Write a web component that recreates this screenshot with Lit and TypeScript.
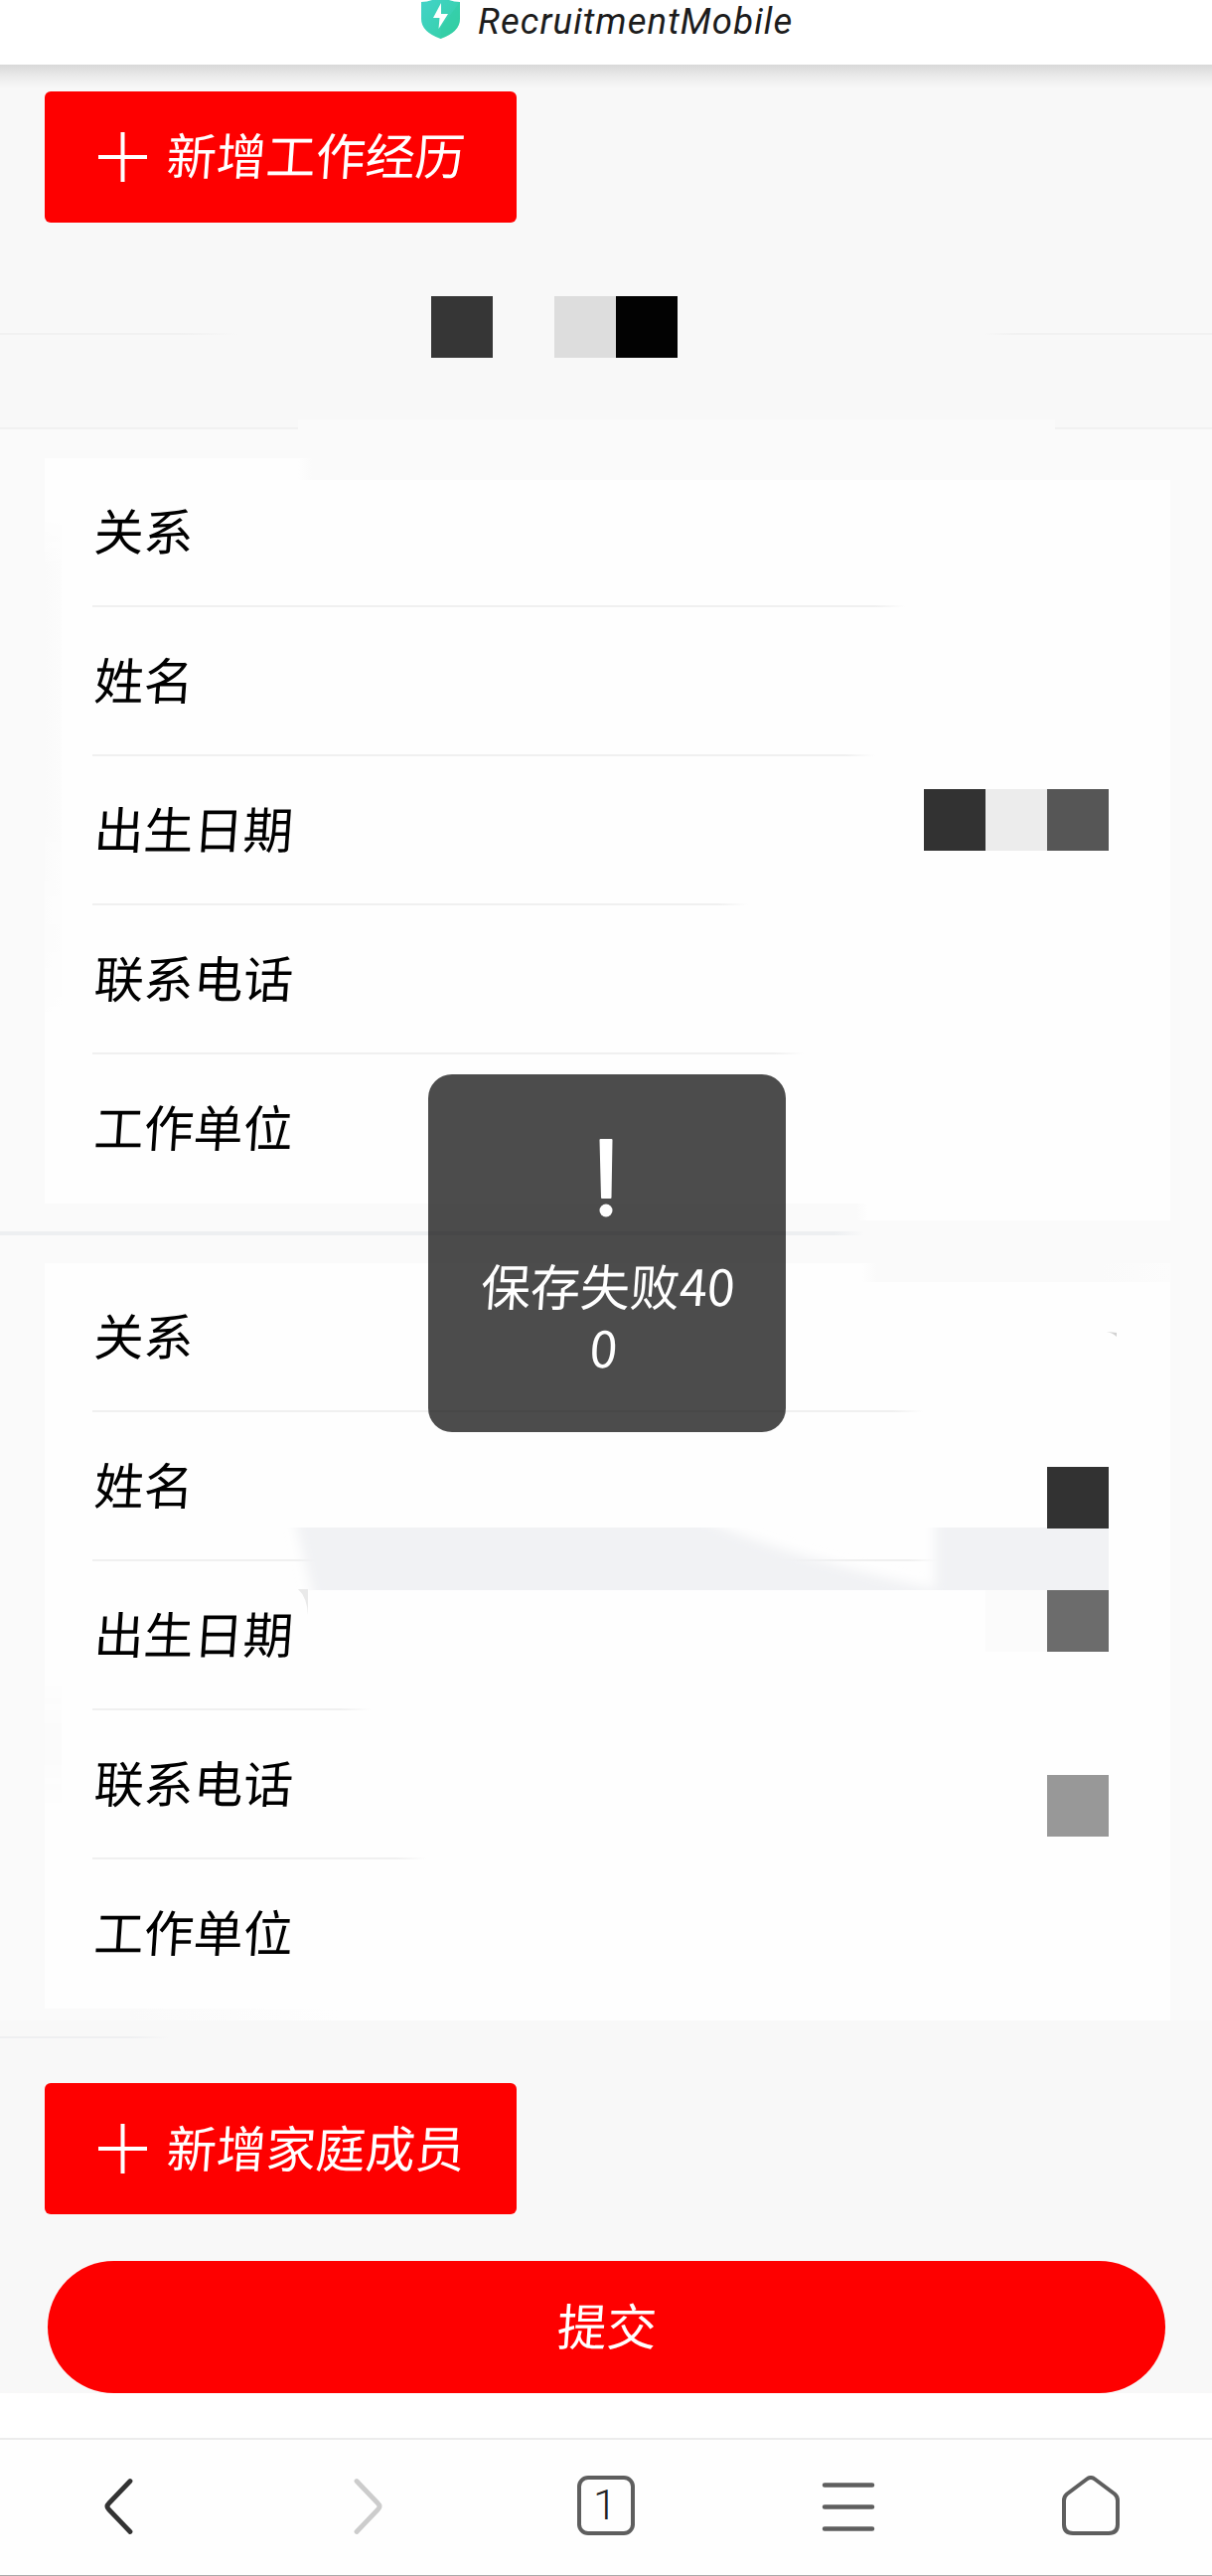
import { LitElement, html, css } from "lit";
import { customElement, property } from "lit/decorators.js";

interface Row {
  label: string;
  /** Width of the separator under the row, in pixels; 0 draws none. */
  rule: number;
}

const FIRST: Row[] = [
  { label: "关系", rule: 818 },
  { label: "姓名", rule: 788 },
  { label: "出生日期", rule: 660 },
  { label: "联系电话", rule: 716 },
  { label: "工作单位", rule: 0 },
];

const SECOND: Row[] = [
  { label: "关系", rule: 836 },
  { label: "姓名", rule: 852 },
  { label: "出生日期", rule: 280 },
  { label: "联系电话", rule: 336 },
  { label: "工作单位", rule: 0 },
];

const FONT = css`"Noto Sans CJK SC", "Liberation Sans", sans-serif`;

@customElement("member-card")
class MemberCard extends LitElement {
  @property({ attribute: false }) rows: Row[] = [];

  static styles = css`
    :host {
      display: block;
      background: #fefefe;
      font-family: ${FONT};
    }
    .row {
      box-sizing: border-box;
      height: 150px;
      padding: 0 48px;
      display: flex;
      flex-direction: column;
    }
    .label {
      flex: 1;
      display: flex;
      align-items: center;
      padding: 0 0 7px 2px;
      font-size: 50px;
      font-weight: 400;
      line-height: 1;
      color: #000;
      transform: skewX(-4deg);
    }
    .rule {
      height: 2px;
      flex: none;
      background: linear-gradient(90deg, #f0f0f0 calc(100% - 30px), #fefefe);
    }
  `;

  render() {
    return this.rows.map(
      (r) => html`<div class="row">
        <div class="label">${r.label}</div>
        <div class="rule" style="width:${r.rule}px"></div>
      </div>`
    );
  }
}

@customElement("add-button")
class AddButton extends LitElement {
  @property() label = "";

  static styles = css`
    :host {
      box-sizing: border-box;
      display: flex;
      align-items: center;
      gap: 20px;
      width: 475px;
      height: 132px;
      margin-left: 45px;
      padding-left: 54px;
      border-radius: 6px;
      background: #fe0000;
      color: #fff;
      font-family: ${FONT};
      font-size: 50px;
      font-weight: 400;
      line-height: 1;
    }
    .plus {
      width: 49px;
      height: 50px;
      flex: none;
    }
    .text {
      white-space: nowrap;
      padding-bottom: 7px;
      transform: skewX(-4deg);
    }
  `;

  render() {
    return html`<svg class="plus" viewBox="0 0 49 50">
        <path d="M0 25H49M24.5 0V50" stroke="#fff" stroke-width="4" />
      </svg>
      <span class="text">${this.label}</span>`;
  }
}

@customElement("app-root")
class AppRoot extends LitElement {
  static styles = css`
    :host {
      position: relative;
      display: flex;
      flex-direction: column;
      width: 1220px;
      height: 2592px;
      overflow: hidden;
      background: #fff;
      font-family: ${FONT};
    }
    .header {
      height: 65px;
      flex: none;
      box-sizing: border-box;
      padding-left: 424px;
      display: flex;
      align-items: flex-start;
      background: #fff;
    }
    .shield {
      width: 40px;
      height: 40px;
      margin-right: 17px;
    }
    .title {
      font-family: Roboto, "Liberation Sans", sans-serif;
      font-style: italic;
      font-size: 36.5px;
      letter-spacing: 1.1px;
      line-height: 43px;
      color: #1c1c1c;
      white-space: nowrap;
    }
    .body {
      height: 2343px;
      flex: none;
      background: linear-gradient(#d8d8d8, #ebebeb 12px, #f8f8f8 24px);
    }
    .work {
      padding-top: 26.5px;
      height: 132.5px;
    }
    .section {
      box-sizing: border-box;
      height: 208px;
      padding-top: 73px;
      border-bottom: 2px solid #f1f1f1;
      display: grid;
      grid-template-columns: 240px 1fr 230px;
      align-items: start;
    }
    .hair {
      height: 2px;
      margin-top: 38px;
      background: linear-gradient(90deg, #f1f1f1 75%, #f8f8f8);
    }
    .hair.flip {
      background: linear-gradient(270deg, #f1f1f1 85%, #f8f8f8);
    }
    .tiles {
      display: flex;
      padding-left: 194px;
      padding-top: 0.5px;
    }
    .tile {
      width: 62px;
      height: 62px;
    }
    .t0 { background: #363636; }
    .t2 { background: #dddddd; }
    .t3 { background: #020202; }
    .family {
      height: 1601px;
      background: #fafafa;
      padding-top: 29px;
      box-sizing: border-box;
    }
    member-card {
      margin: 0 42px 0 45px;
    }
    .divider {
      width: 870px;
      height: 4px;
      margin: 28px 0;
      background: linear-gradient(90deg, #edeff1 840px, #fafafa);
    }
    .tail {
      height: 63px;
      background: #f8f8f8;
    }
    .submit {
      box-sizing: border-box;
      height: 133px;
      margin: 47px 47px 0 48px;
      border-radius: 67px;
      background: #fe0000;
      color: #fff;
      display: flex;
      align-items: center;
      justify-content: center;
      font-size: 50px;
      font-weight: 400;
      line-height: 1;
    }
    .submit span {
      padding-bottom: 7px;
      transform: skewX(-4deg);
    }
    .nav {
      box-sizing: border-box;
      height: 139px;
      margin-top: 45px;
      border-top: 2px solid #ececec;
      border-bottom: 1px solid #aaa;
      background: #fefefe;
      display: grid;
      grid-template-columns: repeat(5, 244px);
      justify-items: center;
      padding-top: 36px;
    }
    .nav svg {
      width: 64px;
      height: 64px;
    }
    .tab {
      box-sizing: border-box;
      width: 58px;
      height: 60px;
      margin-top: 0;
      border: 4px solid #5e5e5e;
      border-radius: 11px;
      display: flex;
      align-items: center;
      justify-content: center;
      padding: 0 2px 1px 0;
      font-family: Roboto, "Liberation Sans", sans-serif;
      font-size: 43px;
      font-weight: 300;
      line-height: 1;
      color: #222;
    }
    .patch {
      position: absolute;
    }
    .toast {
      position: absolute;
      left: 431px;
      top: 1080.5px;
      width: 360px;
      height: 360px;
      box-sizing: border-box;
      padding: 61px 46px 0;
      border-radius: 24px;
      background: rgba(0, 0, 0, 0.7);
      color: #fff;
      text-align: center;
    }
    .bang {
      display: block;
      width: 20px;
      height: 84px;
      margin: 0 auto 35px;
      padding-right: 2px;
    }
    .message {
      font-size: 50px;
      font-weight: 400;
      line-height: 62px;
      word-break: break-all;
      transform: translateX(-1px) skewX(-4deg);
    }
    .p1 { left: 300px; top: 422px; width: 762px; height: 12px; background: #fafafa; }
    .p2 { left: 300px; top: 461px; width: 878px; height: 22px; background: linear-gradient(90deg, #fefefe, #fafafa 14px); }
    .p3 { left: 45px; top: 520px; width: 17px; height: 520px; background: linear-gradient(90deg, #fafafa, #fcfcfc); -webkit-mask: linear-gradient(transparent, #000 50px, #000 300px, transparent); }
    .p4 { left: 862px; top: 1211px; width: 316px; height: 17px; background: linear-gradient(90deg, #fafafa, #fefefe 12px); }
    .p5 { left: 868px; top: 1271px; width: 310px; height: 19px; background: linear-gradient(90deg, #fefefe, #fafafa 14px, #fafafa 240px, #fcfcfc); }
    .p6 { left: 45px; top: 1690px; width: 17px; height: 130px; background: #fbfbfb; -webkit-mask: linear-gradient(transparent, #000 50px, #000 80px, transparent); }
    .p7 { left: 130px; top: 2021px; width: 1048px; height: 12px; background: linear-gradient(90deg, #fafafa, #fefefe 210px); }
    .p8 { left: 130px; top: 2033px; width: 1090px; height: 31px; background: linear-gradient(90deg, rgba(248, 248, 248, 0), #f8f8f8 45px); }
    .p9 { left: 0; top: 2049px; width: 170px; height: 2px; background: linear-gradient(90deg, #eeeff1 130px, #f8f8f8); }
    .q1 { left: 930px; top: 793.5px; background: #323232; }
    .q2 { left: 992px; top: 793.5px; background: #ececec; }
    .q3 { left: 1054px; top: 793.5px; background: #565656; }
    .q4 { left: 1054px; top: 1475.5px; background: #323232; }
    .q5 { left: 992px; top: 1599.5px; background: #fbfbfb; }
    .q6 { left: 1054px; top: 1599.5px; background: #6c6c6c; }
    .q7 { left: 1054px; top: 1785.5px; background: #989898; }
    .smear { left: 285px; top: 1537px; width: 831px; height: 63px; }
    .speck { left: 1112px; top: 1338px; width: 14px; height: 9px; }
    .corner { left: 300px; top: 1599px; width: 10px; height: 26px; }
  `;

  render() {
    return html`
      <div class="header">
        <svg class="shield" viewBox="0 0 40 40">
          <defs>
            <linearGradient id="g" x1="0" y1="0" x2="1" y2="1">
              <stop offset="0" stop-color="#43d3cb" />
              <stop offset="1" stop-color="#35d0a2" />
            </linearGradient>
          </defs>
          <path d="M0 2Q11 2 19.500 -5Q28 2 39 2V19Q39 32 19.500 39Q0 32 0 19Z" fill="url(#g)" />
          <path d="M19.500 28V39Q39 32 39 19V2Z" fill="#2dcb9f" opacity=".35" />
          <path d="M20 3L12 18H18.500L17.500 29L27 14H20Z" fill="#fff" />
        </svg>
        <span class="title">RecruitmentMobile</span>
      </div>
      <div class="body">
        <div class="work"><add-button label="新增工作经历"></add-button></div>
        <div class="section">
          <div class="hair"></div>
          <div class="tiles">
            <div class="tile t0"></div>
            <div class="tile"></div>
            <div class="tile t2"></div>
            <div class="tile t3"></div>
          </div>
          <div class="hair flip"></div>
        </div>
        <div class="family">
          <member-card .rows=${FIRST}></member-card>
          <div class="divider"></div>
          <member-card .rows=${SECOND}></member-card>
        </div>
        <div class="tail"></div>
        <add-button label="新增家庭成员"></add-button>
        <div class="submit"><span>提交</span></div>
      </div>
      <div class="nav">
        <svg viewBox="0 0 64 64" fill="none" stroke="#333" stroke-width="4.800" stroke-linecap="round">
          <path d="M41 5.500L19.500 28Q16.500 31 19.500 34L41 56.500" />
        </svg>
        <svg viewBox="0 0 64 64" fill="none" stroke="#ccc" stroke-width="4.800" stroke-linecap="round">
          <path d="M25 5.500L46.500 28Q49.500 31 46.500 34L25 56.500" />
        </svg>
        <div class="tab">1</div>
        <svg viewBox="0 0 64 64" stroke="#5e5e5e" stroke-width="4.500" stroke-linecap="round">
          <path d="M8 9.500H56M8 31.500H56M8 53.500H56" />
        </svg>
        <svg viewBox="0 0 64 64" fill="none" stroke="#5e5e5e" stroke-width="4" stroke-linejoin="round">
          <path d="M28 3.500Q32 0.500 36 3.500L56 18.500Q59 21 59 25V49Q59 58 50 58H14Q5 58 5 49V25Q5 21 8 18.500Z" />
        </svg>
      </div>

      ${[1, 2, 3, 4, 5, 6, 7, 8, 9].map((n) => html`<div class="patch p${n}"></div>`)}
      <svg class="patch smear" viewBox="0 0 831 63">
        <defs>
          <filter id="b" x="-10%" y="-50%" width="120%" height="200%">
            <feGaussianBlur stdDeviation="6" />
          </filter>
        </defs>
        <g fill="#f1f2f4" filter="url(#b)">
          <path d="M6 -30H385Q420 -5 490 18T672 66V100H38Z" />
          <path d="M656 -30H860V100H656Z" />
        </g>
      </svg>
      <svg class="patch corner" viewBox="0 0 10 26">
        <path d="M0 0H10V26Q9 8 0 0Z" fill="#e9e9e9" />
      </svg>
      <svg class="patch speck" viewBox="0 0 14 9">
        <path d="M2 2Q8 3 12 7V3Z" fill="#d2d2d2" />
      </svg>
      ${[1, 2, 3, 4, 5, 6, 7].map((n) => html`<div class="patch tile q${n}"></div>`)}

      <div class="toast">
        <svg class="bang" viewBox="0 0 20 84">
          <path d="M4.500 4H15.500Q16.500 4 16.500 5L15.500 63Q15.500 64 14.500 64H6Q5 64 5 63L3.500 5Q3.500 4 4.500 4Z" fill="#fff" />
          <circle cx="10" cy="76" r="6.500" fill="#fff" />
        </svg>
        <div class="message">保存失败400</div>
      </div>
    `;
  }
}
